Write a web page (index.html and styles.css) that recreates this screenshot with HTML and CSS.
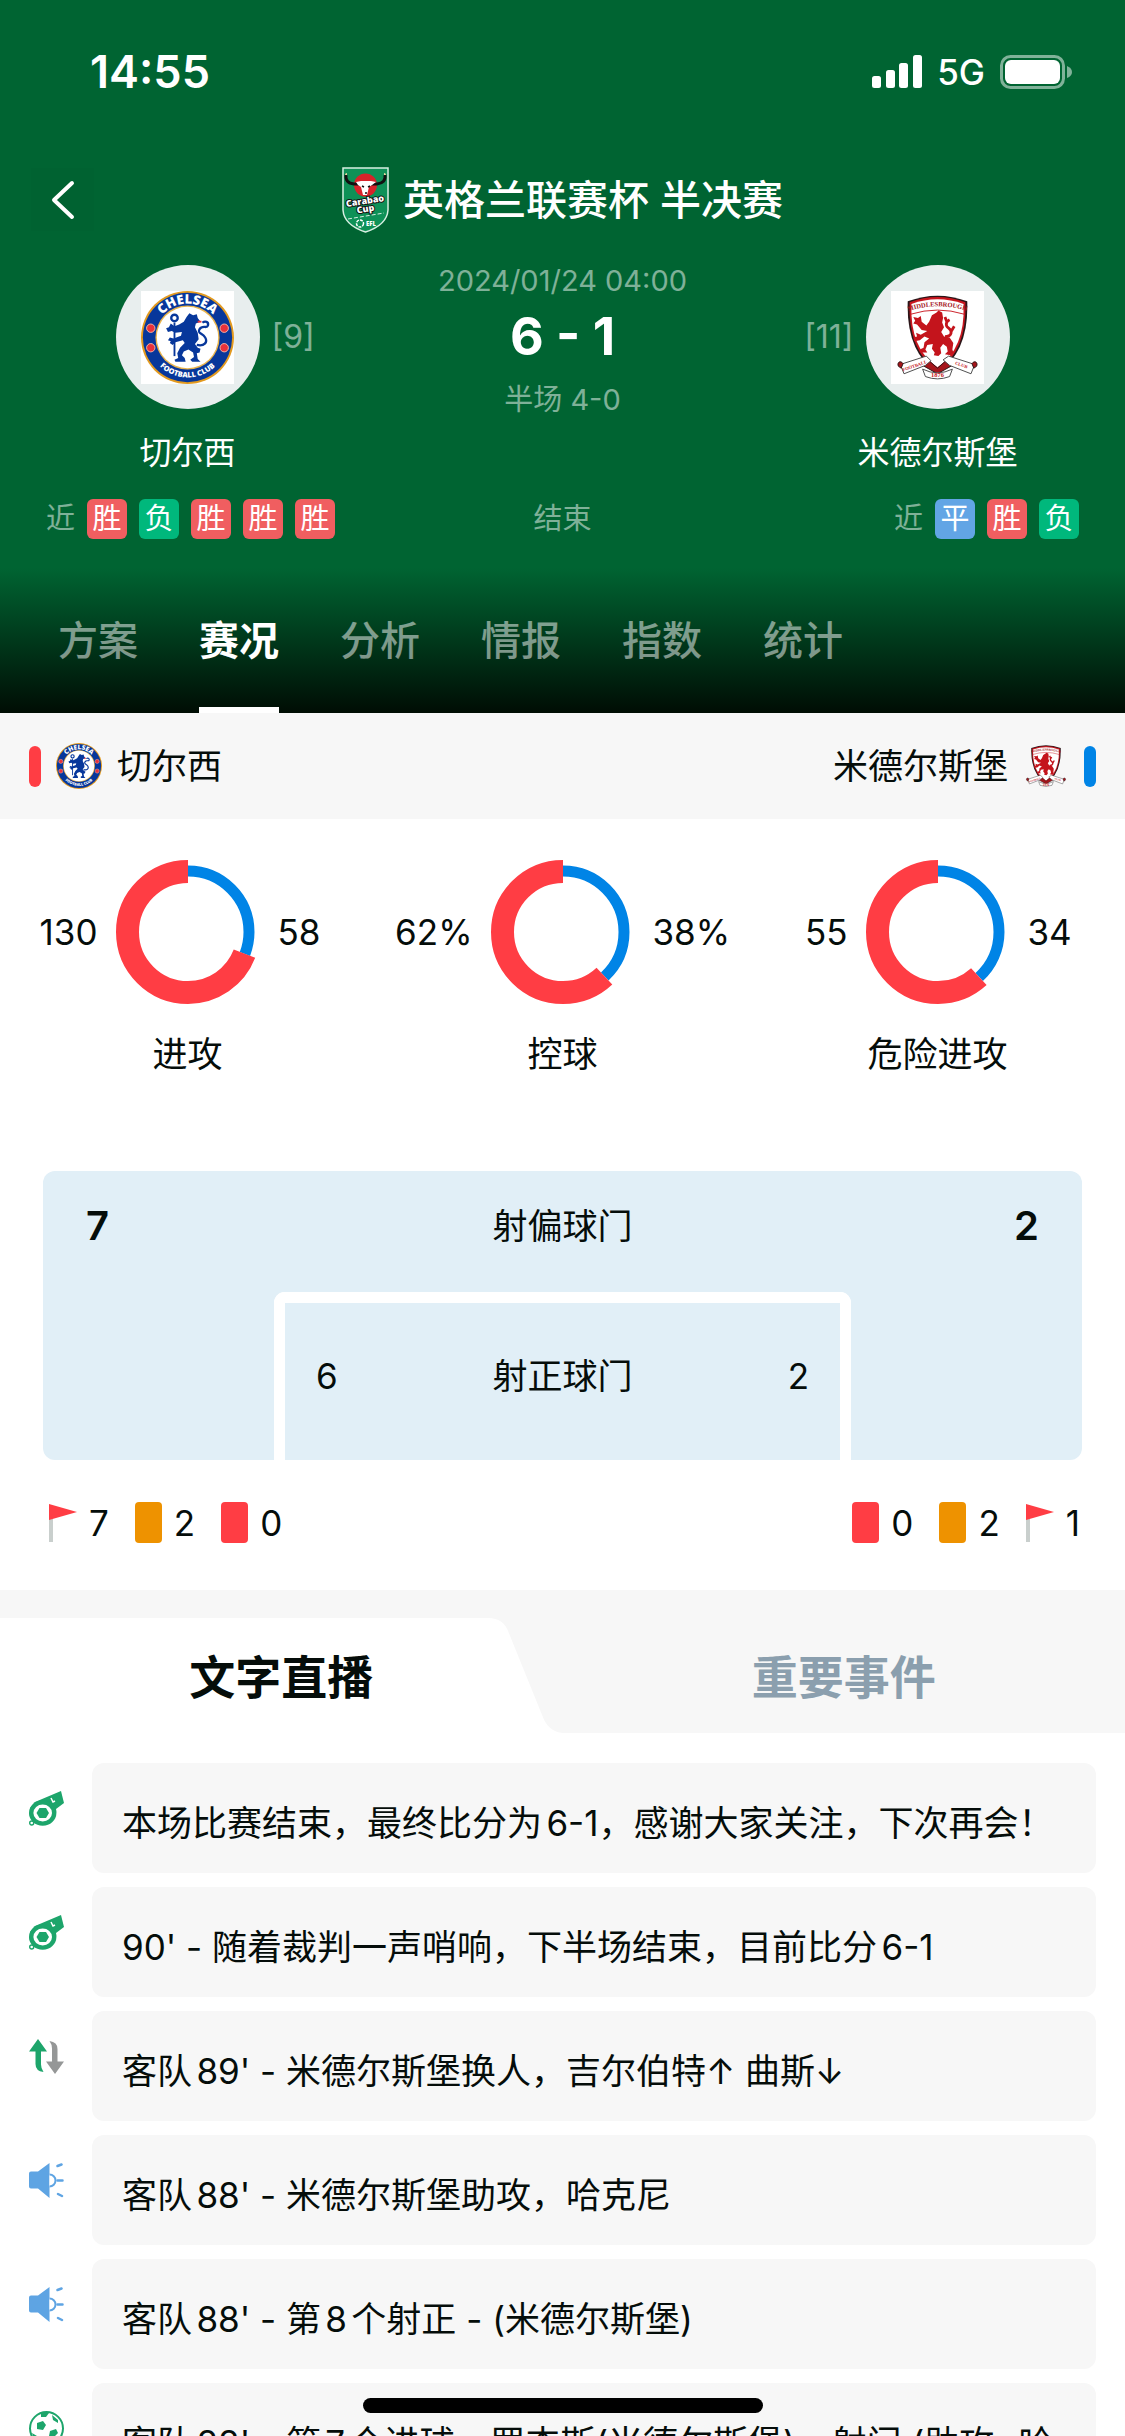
FILE: index.html
```html
<!DOCTYPE html>
<html lang="zh-CN">

<head>
  <meta charset="utf-8">
  <meta name="viewport" content="width=device-width">
  <title>切尔西 6-1 米德尔斯堡</title>
  <link rel="stylesheet" href="styles.css">
</head>

<body>
  <!-- shared icons -->
  <svg class="sprite" aria-hidden="true">
    <defs>
      <path id="arc-top" d="M13.500 50a36.500 36.500 0 0 1 73 0" />
      <path id="arc-bottom" d="M7 50a43 43 0 0 0 86 0" />
      <path id="arc-boro" d="M20 21Q50 12 80 21" />
    </defs>

    <symbol id="whistle" viewBox="0 0 35 35">
      <path d="M1 17L6 11 32 0l3 12-8 6a13.500 12.500 0 0 1-26.500 5z" fill="#1da56b" />
      <ellipse cx="13.700" cy="22" rx="13.700" ry="12.700" fill="#1da56b" />
      <ellipse cx="13.700" cy="22" rx="9.300" ry="8.500" fill="#fff" />
      <path d="M10.500 17h6.500l3 5-3 5h-6.500l-3-5z" fill="#1da56b" />
      <path d="M22 7l2 4 2-1" fill="none" stroke="#fff" stroke-width="1.500" />
      <circle cx="2.700" cy="32" r="2" fill="#fff" stroke="#1da56b" stroke-width="1.400" />
    </symbol>

    <symbol id="swap" viewBox="0 0 35 35">
      <path d="M9 0l9 12.500h-6v13q0 4 2.500 7.500-8-1-8-8v-12.500H0z" fill="#1da56b" />
      <path d="M26 35l-9-12.500h6v-13q0-4-2.500-7.500 8 1 8 8v12.500h6.500z" fill="#959797" />
    </symbol>

    <symbol id="speaker" viewBox="0 0 35 35">
      <path d="M2 8.500h7L20.500 0v35L9 25.500H2q-2 0-2-2v-13q0-2 2-2z" fill="#5ea4e3" />
      <path d="M20.500 11.500a6 6 0 0 1 0 12" fill="#fff" stroke="#5ea4e3" stroke-width="2" />
      <path d="M28.500 3l4-1.500M28.500 17.500h5M29 31l4 2" fill="none" stroke="#5ea4e3" stroke-width="2.500" stroke-linecap="round" />
    </symbol>

    <symbol id="ball" viewBox="0 0 35 35">
      <circle cx="17.500" cy="17.500" r="16.500" fill="#fff" stroke="#1da56b" stroke-width="2" />
      <path d="M8 12l6-2 3 4-3 5-6-1zM21 20l6-2 2 4-4 4-5-1zM12 2l8 0-3 4-5 0zM23 4l6 5v3l-5-3zM3 22l5 3 1 5-4-2zM14 29l5 0 2 4-8 0z" fill="#1da56b" />
    </symbol>

    <symbol id="flag" viewBox="0 0 28 38">
      <path d="M0 15h4v23H0z" fill="#c9cfcd" />
      <path d="M0 0l28 8L0 16z" fill="#ff3d44" />
    </symbol>
  </svg>

  <header class="header">
    <div class="statusbar">
      <span class="time">14:55</span>
      <div class="status-icons">
        <svg class="signal" viewBox="0 0 50 34" aria-hidden="true">
          <g fill="#fff">
            <rect x="0" y="21" width="9" height="12" rx="2.500" />
            <rect x="14" y="15" width="9" height="18" rx="2.500" />
            <rect x="27" y="8" width="9" height="25" rx="2.500" />
            <rect x="41" y="0" width="9" height="33" rx="2.500" />
          </g>
        </svg>
        <span class="network">5G</span>
        <svg class="battery" viewBox="0 0 72 34" aria-hidden="true">
          <rect x="1.500" y="1.500" width="62" height="31" rx="9" fill="none" stroke="#fff" stroke-opacity=".5" stroke-width="3" />
          <rect x="5" y="5" width="55" height="24" rx="6" fill="#fff" />
          <path d="M67 11q5 2 5 6t-5 6z" fill="#fff" fill-opacity=".5" />
        </svg>
      </div>
    </div>

    <div class="navbar">
      <button class="back" aria-label="返回">
        <svg viewBox="0 0 63 63" aria-hidden="true"><path d="M41 15L23 32l18 17" fill="none" stroke="#fff" stroke-width="4" stroke-linecap="round" stroke-linejoin="round" /></svg>
      </button>
      <div class="league">
        <svg class="league-logo" viewBox="0 0 47 66" aria-hidden="true">
          <path d="M1 1h45v42q-1 15-22.500 22Q2 58 1 43z" fill="#0e9157" stroke="#d8efe2" stroke-width="1.500" />
          <circle cx="23.500" cy="18" r="11.500" fill="#d8232a" />
          <path d="M4 8q-1 8 8 9h8M43 8q1 8-8 9h-8" fill="none" stroke="#111" stroke-width="3" />
          <path d="M4 8q0-1 1-1M43 8q0-1-1-1" stroke="#e8d9a0" stroke-width="2" />
          <path d="M14 15l5-1h10l5 1-4 3-3 2-2 8h-4l-2-8-3-2z" fill="#fff" />
          <path d="M20 19l2 1M28 19l-2 1M23 26h2" stroke="#111" stroke-width="1.500" />
          <g class="crest-text" fill="#fff" text-anchor="middle">
            <text transform="translate(23.500 37) rotate(-9)" font-size="9" stroke="#111" stroke-width="2" paint-order="stroke">Carabao</text>
            <text transform="translate(24 45) rotate(-9)" font-size="9" stroke="#111" stroke-width="2" paint-order="stroke">Cup</text>
            <text x="29" y="59" font-size="6">EFL</text>
          </g>
          <path d="M6 52l36-6" stroke="#d8efe2" stroke-width="1" stroke-dasharray="4 2" />
          <circle cx="18" cy="56.500" r="3.500" fill="none" stroke="#fff" stroke-width="1.500" stroke-dasharray="3 1" />
        </svg>
        <h1>英格兰联赛杯 半决赛</h1>
      </div>
    </div>

    <div class="match">
      <div class="team">
        <div class="crest-row">
          <div class="crest">
            <svg class="crest-img" viewBox="0 0 100 100" aria-hidden="true">
              <g id="chelsea">
                <circle cx="50" cy="50" r="50" fill="#e39a1f" />
                <circle cx="50" cy="50" r="48" fill="#07379b" />
                <circle cx="50" cy="50" r="34.500" fill="#e9b44c" />
                <circle cx="50" cy="50" r="33" fill="#fff" />
                <text class="crest-text" font-size="14" fill="#fff" text-anchor="middle"><textPath href="#arc-top" startOffset="50%">CHELSEA</textPath></text>
                <text class="crest-text" font-size="8" fill="#fff" text-anchor="middle"><textPath href="#arc-bottom" startOffset="50%">FOOTBALL CLUB</textPath></text>
                <g fill="#e8323c" stroke="#f6b9a8" stroke-width="1">
                  <circle cx="10.500" cy="40" r="4.500" />
                  <circle cx="10.500" cy="61" r="4.500" />
                  <circle cx="89.500" cy="40" r="4.500" />
                  <circle cx="89.500" cy="61" r="4.500" />
                </g>
                <g fill="#07379b">
                  <path d="M49 28l3-4 4 2 4-1 1 4 3 4-5 2-1 4 3 6 1 7-4 5 3 4 3 1-1 4-3 1 1 6 3 3h-9l-2-2 4-3-1-5-5-3-5 2-2 4 3 3 1 4h-11l-1-2 4-2-1-5 3-6 5-5-2-3-8 2-3 3-3-2 1-2-3-1 2-3 4 1 8-3 1-4-7 1-4-2-4 1-2-4 3-1 2-4 4 3 5-2 5-3z" />
                  <path d="M36 34v36" stroke="#07379b" stroke-width="2" />
                  <circle cx="36" cy="29" r="3.500" fill="none" stroke="#07379b" stroke-width="2.500" />
                  <path d="M60 58c8 2 12-3 9-8s-9-4-6-9 8 0 9-4-3-5-6-3" fill="none" stroke="#07379b" stroke-width="2.500" />
                </g>
                <path d="M61 32h4v2h-4z" fill="#e8323c" />
              </g>
            </svg>
          </div>
          <span class="rank rank-home">[9]</span>
        </div>
        <div class="team-name">切尔西</div>
      </div>
      <div class="score-box">
        <div class="muted">2024/01/24 04:00</div>
        <div class="score">6 - 1</div>
        <div class="muted">半场 4-0</div>
      </div>
      <div class="team">
        <div class="crest-row">
          <span class="rank rank-away">[11]</span>
          <div class="crest">
            <svg class="crest-img" viewBox="0 0 100 100" aria-hidden="true">
              <g id="boro">
                <path d="M18 11Q50-1 82 11Q84 66 50 88Q16 66 18 11z" fill="#2a1518" />
                <path d="M20 12Q50 1 80 12Q82 64 50 86Q18 64 20 12z" fill="#c8161e" />
                <path d="M22 14Q50 4 78 14Q80 62 50 82Q20 62 22 14z" fill="#fff" />
                <path d="M21 25Q50 16 79 25" fill="none" stroke="#c8161e" stroke-width="1" />
                <text class="crest-serif" font-size="7" fill="#a5151b" text-anchor="middle"><textPath href="#arc-boro" startOffset="50%">MIDDLESBROUGH</textPath></text>
                <g fill="#c4141c">
                  <path d="M44 26l5-3 2-2 4 2 1 6-1 5 2 5-3 5 3 5 6 1 4 6-1 7 1 3-3 3-6-1 3-3-1-5-4-3-3 4 1 6-3 3-5-1 1-3-3-4 1-5-6 1-2 5 2 3-6 0-2-3 4-2 1-6 5-4-5-2-5 4-6 1-1-4 4-1-1-4 5 2 7-4-6-1-5-6-4-1 2-3-2-4 5 1 3-2 1 6 5 4 3-4z" />
                  <path d="M58 49c8 0 8-6 4-9s-3-7 1-9M65 43l3-5M60 33l-2-5" fill="none" stroke="#c4141c" stroke-width="3" />
                </g>
                <path d="M41 75l-7 5 16 9 16-9-7-5-9 8z" fill="#a5151b" stroke="#2a1518" stroke-width="1" />
                <g fill="#fff" stroke="#444" stroke-width="1">
                  <path d="M10 79l28-9 5 5-6 5-23 9z" />
                  <path d="M90 79l-28-9-6 4 7 6 23 9z" />
                  <path d="M34 84q16 8 32 0l-3 8q-13 5-26 0z" />
                </g>
                <path d="M13 78c-3-4-7-1-5 3l3 2zM87 78c3-4 7-1 5 3l-3 2z" fill="#a5151b" stroke="#2a1518" stroke-width="1" />
                <g class="crest-serif" font-size="5" fill="#c4141c" text-anchor="middle">
                  <text transform="translate(26 82) rotate(-19)">FOOTBALL</text>
                  <text transform="translate(75 81) rotate(19)">CLUB</text>
                  <text x="50" y="93" font-size="7">1876</text>
                </g>
              </g>
            </svg>
          </div>
        </div>
        <div class="team-name">米德尔斯堡</div>
      </div>
    </div>

    <div class="form-row">
      <div class="form">
        <span class="muted">近</span>
        <span class="result win">胜</span>
        <span class="result loss">负</span>
        <span class="result win">胜</span>
        <span class="result win">胜</span>
        <span class="result win">胜</span>
      </div>
      <span class="muted">结束</span>
      <div class="form form-away">
        <span class="muted">近</span>
        <span class="result draw">平</span>
        <span class="result win">胜</span>
        <span class="result loss">负</span>
      </div>
    </div>
  </header>

  <nav class="tabs">
    <a class="tab" href="#plan">方案</a>
    <a class="tab active" href="#live">赛况</a>
    <a class="tab" href="#analysis">分析</a>
    <a class="tab" href="#news">情报</a>
    <a class="tab" href="#odds">指数</a>
    <a class="tab" href="#stats">统计</a>
  </nav>

  <main>
    <div class="legend">
      <div class="legend-team">
        <span class="mark mark-home"></span>
        <svg class="legend-crest" viewBox="0 0 100 100" aria-hidden="true"><use href="#chelsea" /></svg>
        <span>切尔西</span>
      </div>
      <div class="legend-team">
        <span>米德尔斯堡</span>
        <svg class="legend-crest" viewBox="0 0 100 100" aria-hidden="true"><use href="#boro" /></svg>
        <span class="mark mark-away"></span>
      </div>
    </div>

    <section class="stats">
      <!-- pathLength is the sum of both values, so the dashes are the values themselves -->
      <div class="rings">
        <div class="ring-item">
          <div class="ring-row">
            <span class="ring-home">130</span>
            <svg class="ring" viewBox="0 0 144 144" aria-hidden="true">
              <circle class="ring-blue" cx="72" cy="72" r="61" pathLength="188" stroke-dasharray="58 130" />
              <circle class="ring-red" cx="72" cy="72" r="60.500" pathLength="188" stroke-dasharray="130 58" stroke-dashoffset="-58" />
            </svg>
            <span>58</span>
          </div>
          <div>进攻</div>
        </div>
        <div class="ring-item">
          <div class="ring-row">
            <span class="ring-home">62%</span>
            <svg class="ring" viewBox="0 0 144 144" aria-hidden="true">
              <circle class="ring-blue" cx="72" cy="72" r="61" pathLength="100" stroke-dasharray="38 62" />
              <circle class="ring-red" cx="72" cy="72" r="60.500" pathLength="100" stroke-dasharray="62 38" stroke-dashoffset="-38" />
            </svg>
            <span>38%</span>
          </div>
          <div>控球</div>
        </div>
        <div class="ring-item">
          <div class="ring-row">
            <span class="ring-home">55</span>
            <svg class="ring" viewBox="0 0 144 144" aria-hidden="true">
              <circle class="ring-blue" cx="72" cy="72" r="61" pathLength="89" stroke-dasharray="34 55" />
              <circle class="ring-red" cx="72" cy="72" r="60.500" pathLength="89" stroke-dasharray="55 34" stroke-dashoffset="-34" />
            </svg>
            <span>34</span>
          </div>
          <div>危险进攻</div>
        </div>
      </div>

      <div class="pitch">
        <div class="shots">
          <strong>7</strong>
          <span>射偏球门</span>
          <strong>2</strong>
        </div>
        <div class="goal">
          <div class="shots">
            <span>6</span>
            <span>射正球门</span>
            <span>2</span>
          </div>
        </div>
      </div>

      <div class="cards">
        <div class="card-group">
          <span class="card-item"><svg class="flag" aria-hidden="true"><use href="#flag" /></svg>7</span>
          <span class="card-item"><i class="card yellow"></i>2</span>
          <span class="card-item"><i class="card red"></i>0</span>
        </div>
        <div class="card-group">
          <span class="card-item"><i class="card red"></i>0</span>
          <span class="card-item"><i class="card yellow"></i>2</span>
          <span class="card-item"><svg class="flag" aria-hidden="true"><use href="#flag" /></svg>1</span>
        </div>
      </div>
    </section>

    <div class="live-tabs">
      <button class="live-tab selected">
        <svg class="live-tab-bg" viewBox="0 0 562 115" preserveAspectRatio="none" aria-hidden="true"><path d="M0 0H488Q503 0 508 14L542 98Q548 115 565 115H0z" fill="#fff" /></svg>
        <span class="live-tab-text">文字直播</span>
      </button>
      <button class="live-tab">重要事件</button>
    </div>

    <ul class="live">
      <li class="event">
        <svg class="event-icon" aria-hidden="true"><use href="#whistle" /></svg>
        <p class="event-text">本场比赛结束，最终比分为6-1，感谢大家关注，下次再会！</p>
      </li>
      <li class="event">
        <svg class="event-icon" aria-hidden="true"><use href="#whistle" /></svg>
        <p class="event-text">90' - 随着裁判一声哨响，下半场结束，目前比分6-1</p>
      </li>
      <li class="event">
        <svg class="event-icon" aria-hidden="true"><use href="#swap" /></svg>
        <p class="event-text">客队89' - 米德尔斯堡换人，吉尔伯特↑ 曲斯↓</p>
      </li>
      <li class="event">
        <svg class="event-icon" aria-hidden="true"><use href="#speaker" /></svg>
        <p class="event-text">客队88' - 米德尔斯堡助攻，哈克尼</p>
      </li>
      <li class="event">
        <svg class="event-icon" aria-hidden="true"><use href="#speaker" /></svg>
        <p class="event-text">客队88' - 第8个射正 - (米德尔斯堡)</p>
      </li>
      <li class="event">
        <svg class="event-icon" aria-hidden="true"><use href="#ball" /></svg>
        <p class="event-text">客队88' - 第7个进球 - 罗杰斯(米德尔斯堡) - 射门 (助攻: 哈克尼)</p>
      </li>
    </ul>
  </main>

  <div class="home-indicator"></div>
</body>

</html>
```

FILE: styles.css
```css
:root {
  --green: #006432;
  --red: #ff3d44;
  --blue: #0084e6;
  --gray-bg: #f7f7f7;
  --pitch: #e1eff7;
  --text: #050d0a;
}

* {
  margin: 0;
  padding: 0;
  box-sizing: border-box;
}

body {
  height: 100vh;
  overflow: hidden;
  background: #fff;
  color: var(--text);
  font-family: Inter, 'Noto Sans CJK SC', sans-serif;
  font-size: 35px;
  line-height: 44px;
}

button {
  border: none;
  background: none;
  font-family: inherit;
  cursor: pointer;
}

.sprite {
  position: absolute;
  width: 0;
  height: 0;
}

.crest-text {
  font-family: 'Open Sans', sans-serif;
  font-weight: 800;
}

.crest-serif {
  font-family: 'Liberation Serif', serif;
  font-weight: 700;
}

/* header */
.header {
  background: var(--green);
  color: #fff;
  padding-bottom: 29px;
}

.statusbar {
  display: flex;
  justify-content: space-between;
  align-items: center;
  height: 144px;
  padding: 0 53px 0 90px;
}

.time {
  font-size: 45px;
  font-weight: 600;
}

.status-icons {
  display: flex;
  align-items: center;
  gap: 15px;
}

.signal {
  width: 50px;
  height: 34px;
}

.network {
  font-size: 35px;
  font-weight: 500;
}

.battery {
  width: 72px;
  height: 34px;
}

.navbar {
  display: grid;
  grid-template-columns: 1fr auto 1fr;
  align-items: center;
  padding: 24px 31px 34px;
}

.back {
  width: 63px;
  height: 63px;
  background: rgba(0, 0, 0, 0.02);
}

.back svg {
  display: block;
}

.league {
  display: flex;
  align-items: center;
  gap: 14px;
  height: 63px;
}

.league-logo {
  width: 47px;
  height: 66px;
}

.league h1 {
  font-size: 41px;
  font-weight: 500;
}

.match {
  display: grid;
  grid-template-columns: 1fr 1fr 1fr;
  text-align: center;
}

.crest-row {
  display: grid;
  grid-template-columns: 1fr 144px 1fr;
  align-items: center;
  gap: 12px;
}

.crest {
  grid-column: 2;
  grid-row: 1;
  display: flex;
  align-items: center;
  justify-content: center;
  height: 144px;
  border-radius: 50%;
  background: #e8eeee;
}

.crest-img {
  width: 93px;
  height: 93px;
  background: #fff;
}

.rank {
  font-size: 32px;
  color: rgba(255, 255, 255, 0.5);
}

.rank-home {
  grid-column: 3;
  text-align: left;
}

.rank-away {
  grid-column: 1;
  text-align: right;
}

.team-name {
  margin-top: 22px;
  font-size: 32px;
}

.muted {
  font-size: 29px;
  line-height: 32px;
  color: rgba(255, 255, 255, 0.5);
}

.score {
  margin: 8px 0 15px;
  font-size: 52px;
  line-height: 64px;
  font-weight: 700;
}

.form-row {
  display: grid;
  grid-template-columns: 1fr auto 1fr;
  align-items: center;
  padding: 24px 46px 0;
}

.form {
  display: flex;
  align-items: center;
  gap: 12px;
}

.form-away {
  justify-content: flex-end;
}

.result {
  width: 40px;
  height: 40px;
  border-radius: 6px;
  font-size: 29px;
  line-height: 40px;
  text-align: center;
}

.win {
  background: #f05e60;
}

.loss {
  background: #00b87c;
}

.draw {
  background: #62a5e5;
}

.tabs {
  display: flex;
  gap: 61px;
  height: 145px;
  padding: 0 58px;
  background: linear-gradient(var(--green), #000d04);
}

.tab {
  padding-top: 51px;
  border-bottom: 6px solid transparent;
  font-size: 40px;
  font-weight: 500;
  color: rgba(255, 255, 255, 0.5);
  text-decoration: none;
}

.tab.active {
  border-color: #fff;
  color: #fff;
  font-weight: 700;
}

/* match stats */
.legend {
  display: flex;
  justify-content: space-between;
  align-items: center;
  height: 106px;
  padding: 0 29px;
  background: var(--gray-bg);
}

.legend-team {
  display: flex;
  align-items: center;
  gap: 15px;
}

.legend-crest {
  width: 46px;
  height: 46px;
}

.mark {
  width: 12px;
  height: 41px;
  border-radius: 6px;
}

.mark-home {
  background: var(--red);
}

.mark-away {
  background: var(--blue);
}

.stats {
  padding: 41px 43px 47px;
}

.rings {
  display: grid;
  grid-template-columns: 1fr 1fr 1fr;
  margin: 0 -43px 95px;
  text-align: center;
}

.ring-row {
  display: grid;
  grid-template-columns: 1fr 144px 1fr;
  align-items: center;
  gap: 18px;
  margin-bottom: 28px;
  text-align: left;
}

.ring-home {
  text-align: right;
}

.ring {
  width: 144px;
  height: 144px;
  transform: rotate(-90deg);
}

.ring circle {
  fill: none;
}

.ring-blue {
  stroke: var(--blue);
  stroke-width: 11;
}

.ring-red {
  stroke: var(--red);
  stroke-width: 23;
}

.pitch {
  padding-top: 33px;
  border-radius: 12px;
  background: var(--pitch);
}

.shots {
  display: grid;
  grid-template-columns: 1fr auto 1fr;
  padding: 0 43px;
}

.shots strong {
  font-size: 40px;
  font-weight: 600;
}

.shots :last-child {
  text-align: right;
}

.goal {
  margin: 44px 231px 0;
  padding: 51px 0 62px;
  border: 11px solid #fff;
  border-bottom: none;
  border-radius: 11px 11px 0 0;
}

.goal .shots {
  padding: 0 31px;
}

.cards {
  display: flex;
  justify-content: space-between;
  margin-top: 42px;
  padding: 0 2px 0 6px;
}

.card-group {
  display: flex;
  gap: 26px;
}

.card-item {
  display: flex;
  align-items: center;
  gap: 12px;
  height: 41px;
}

.card {
  width: 27px;
  height: 41px;
  border-radius: 4px;
}

.yellow {
  background: #ee9200;
}

.red {
  background: var(--red);
}

.flag {
  width: 28px;
  height: 38px;
}

/* text live */
.live-tabs {
  display: grid;
  grid-template-columns: 1fr 1fr;
  padding-top: 28px;
  background: var(--gray-bg);
}

.live-tab {
  position: relative;
  height: 115px;
  padding-bottom: 4px;
  font-size: 46px;
  font-weight: 700;
  color: #8b9fae;
}

.live-tab.selected {
  color: var(--text);
}

.live-tab-bg {
  position: absolute;
  inset: 0;
  width: 100%;
  height: 100%;
}

.live-tab-text {
  position: relative;
}

.live {
  display: flex;
  flex-direction: column;
  gap: 14px;
  padding: 30px 29px 0;
  list-style: none;
}

.event {
  display: flex;
  align-items: flex-start;
  gap: 28px;
}

.event-icon {
  flex: none;
  width: 35px;
  height: 35px;
  margin-top: 28px;
}

.event-text {
  flex: 1;
  padding: 38px 30px 28px;
  border-radius: 12px;
  background: var(--gray-bg);
  text-autospace: normal;
}

.home-indicator {
  position: fixed;
  left: 50%;
  bottom: 23px;
  width: 400px;
  height: 15px;
  margin-left: -200px;
  border-radius: 8px;
  background: #000;
}
```
